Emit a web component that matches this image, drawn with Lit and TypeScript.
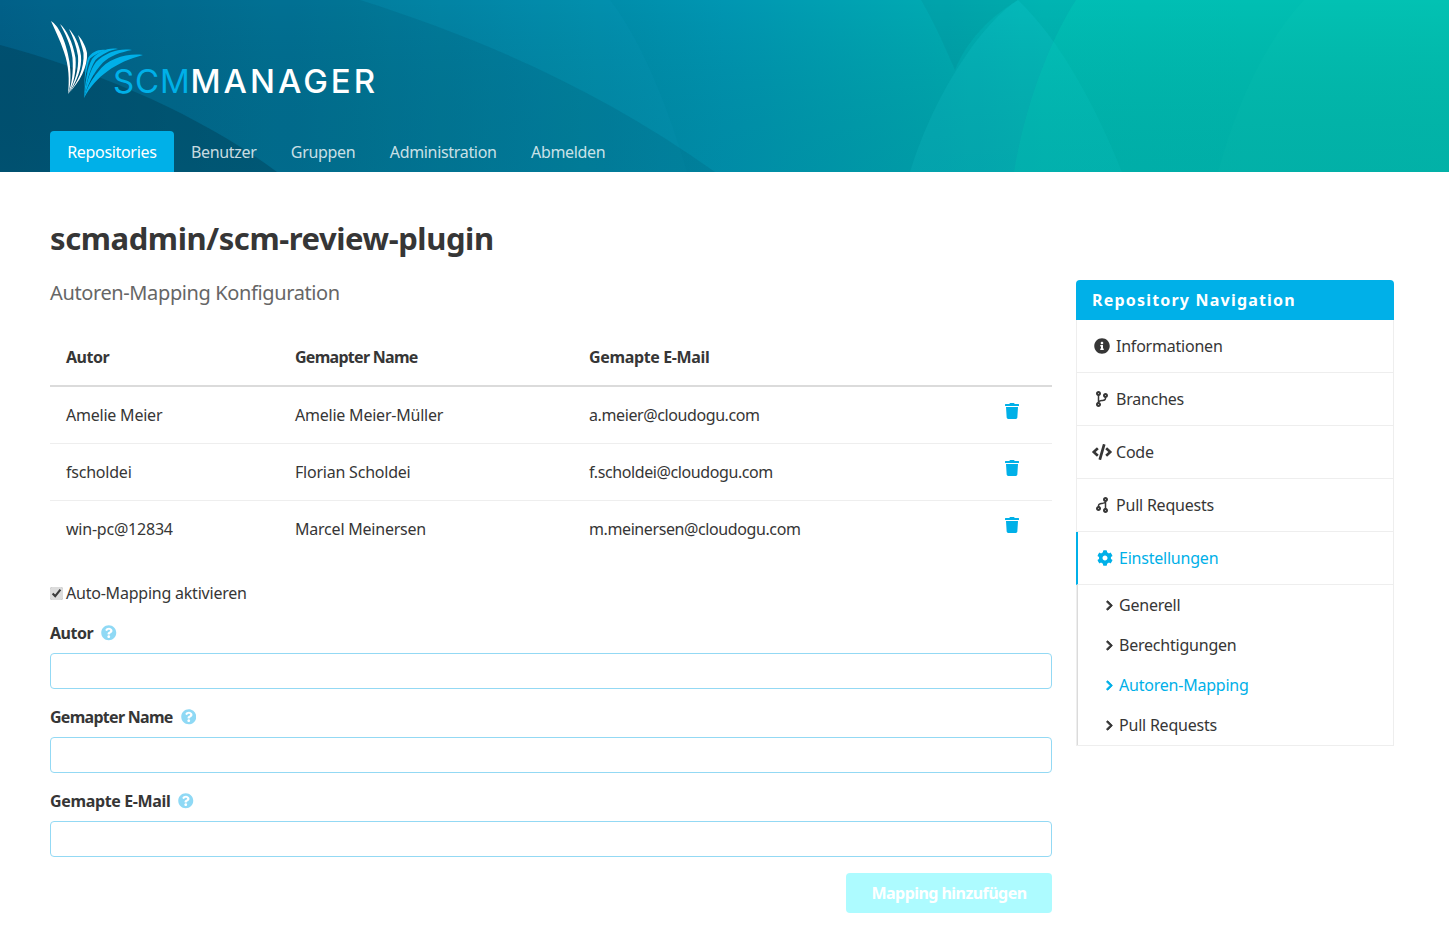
import { LitElement, html, css, svg } from 'lit'
import { customElement } from 'lit/decorators.js'

const ICONS: Record<string, [number, string]> = {
  info: [512, 'M256 8C119.043 8 8 119.083 8 256c0 136.997 111.043 248 248 248s248-111.003 248-248C504 119.083 392.957 8 256 8zm0 110c23.196 0 42 18.804 42 42s-18.804 42-42 42-42-18.804-42-42 18.804-42 42-42zm56 254c0 6.627-5.373 12-12 12h-88c-6.627 0-12-5.373-12-12v-24c0-6.627 5.373-12 12-12h12v-64h-12c-6.627 0-12-5.373-12-12v-24c0-6.627 5.373-12 12-12h64c6.627 0 12 5.373 12 12v100h12c6.627 0 12 5.373 12 12v24z'],
  branch: [384, 'M384 144c0-44.2-35.8-80-80-80s-80 35.8-80 80c0 36.4 24.3 67.1 57.5 76.8-.6 16.1-4.2 28.5-11 36.9-15.4 19.2-49.3 22.4-85.2 25.7-28.2 2.6-57.4 5.4-81.3 16.9v-144c32.5-10.2 56-40.5 56-76.3 0-44.2-35.8-80-80-80S0 35.8 0 80c0 35.8 23.5 66.1 56 76.3v199.3C23.5 365.9 0 396.2 0 432c0 44.2 35.8 80 80 80s80-35.8 80-80c0-34-21.2-63.1-51.2-74.6 3.1-5.2 7.8-9.8 14.9-13.4 16.2-8.2 40.4-10.4 66.1-12.8 42.2-3.9 90-8.4 118.2-43.4 14-17.4 21.1-39.8 21.6-67.9 31.6-10.8 54.4-40.7 54.4-75.9zM80 64c8.8 0 16 7.2 16 16s-7.2 16-16 16-16-7.2-16-16 7.2-16 16-16zm0 384c-8.8 0-16-7.2-16-16s7.2-16 16-16 16 7.2 16 16-7.2 16-16 16zm224-320c8.8 0 16 7.2 16 16s-7.2 16-16 16-16-7.2-16-16 7.2-16 16-16z'],
  code: [640, 'M278.9 511.5l-61-17.7c-6.4-1.8-10-8.5-8.2-14.9L346.2 8.7c1.8-6.4 8.5-10 14.9-8.2l61 17.7c6.4 1.8 10 8.5 8.2 14.9L293.8 503.3c-1.9 6.4-8.5 10.1-14.9 8.2zm-114-112.2l43.5-46.4c4.6-4.9 4.3-12.7-.8-17.2L117 256l90.6-79.7c5.1-4.5 5.5-12.3.8-17.2l-43.5-46.4c-4.5-4.8-12.1-5.1-17-.5L3.8 247.2c-5.1 4.7-5.1 12.8 0 17.5l144.1 135.1c4.9 4.6 12.5 4.4 17-.5zm327.2.6l144.1-135.1c5.1-4.7 5.1-12.8 0-17.5L492.1 112.1c-4.8-4.5-12.4-4.3-17 .5L431.6 159c-4.6 4.9-4.3 12.7.8 17.2L523 256l-90.6 79.7c-5.1 4.5-5.5 12.3-.8 17.2l43.5 46.4c4.5 4.9 12.1 5.1 17 .6z'],
  trash: [448, 'M432 32H312l-9.4-18.7A24 24 0 0 0 281.1 0H166.8a23.72 23.72 0 0 0-21.4 13.3L136 32H16A16 16 0 0 0 0 48v32a16 16 0 0 0 16 16h416a16 16 0 0 0 16-16V48a16 16 0 0 0-16-16zM53.2 467a48 48 0 0 0 47.9 45h245.8a48 48 0 0 0 47.9-45L416 128H32z'],
  cog: [512, 'M487.4 315.7l-42.6-24.6c4.3-23.2 4.3-47 0-70.2l42.6-24.6c4.9-2.8 7.1-8.6 5.5-14-11.1-35.6-30-67.8-54.7-94.6-3.8-4.1-10-5.1-14.8-2.3L380.8 110c-17.9-15.4-38.5-27.3-60.8-35.1V25.8c0-5.6-3.9-10.5-9.4-11.7-36.7-8.2-74.3-7.8-109.2 0-5.5 1.2-9.4 6.1-9.4 11.7V75c-22.2 7.9-42.8 19.8-60.8 35.1L88.7 85.5c-4.9-2.8-11-1.9-14.8 2.3-24.7 26.7-43.6 58.9-54.7 94.6-1.7 5.4.6 11.2 5.5 14L67.3 221c-4.3 23.2-4.3 47 0 70.2l-42.6 24.6c-4.9 2.8-7.1 8.6-5.5 14 11.1 35.6 30 67.8 54.7 94.6 3.8 4.1 10 5.1 14.8 2.3l42.6-24.6c17.9 15.4 38.5 27.3 60.8 35.1v49.2c0 5.6 3.9 10.5 9.4 11.7 36.7 8.2 74.3 7.8 109.2 0 5.5-1.2 9.4-6.1 9.4-11.7v-49.2c22.2-7.9 42.8-19.8 60.8-35.1l42.6 24.6c4.9 2.8 11 1.9 14.8-2.3 24.7-26.7 43.6-58.9 54.7-94.6 1.5-5.5-.7-11.3-5.6-14.1zM256 336c-44.1 0-80-35.9-80-80s35.9-80 80-80 80 35.9 80 80-35.9 80-80 80z'],
  chevron: [320, 'M285.476 272.971L91.132 467.314c-9.373 9.373-24.569 9.373-33.941 0l-22.667-22.667c-9.357-9.357-9.375-24.522-.04-33.901L188.505 256 34.484 101.255c-9.335-9.379-9.317-24.544.04-33.901l22.667-22.667c9.373-9.373 24.569-9.373 33.941 0L285.475 239.03c9.373 9.372 9.373 24.568.001 33.941z'],
  help: [512, 'M504 256c0 136.997-111.043 248-248 248S8 392.997 8 256C8 119.083 119.043 8 256 8s248 111.083 248 248zM262.655 90c-54.497 0-89.255 22.957-116.549 63.758-3.536 5.286-2.353 12.415 2.715 16.258l34.699 26.31c5.205 3.947 12.621 3.008 16.665-2.122 17.864-22.658 30.113-35.797 57.303-35.797 20.429 0 45.698 13.148 45.698 32.958 0 14.976-12.363 22.667-32.534 33.976C247.128 238.528 216 254.941 216 296v4c0 6.627 5.373 12 12 12h56c6.627 0 12-5.373 12-12v-1.333c0-28.462 83.186-29.647 83.186-106.667 0-58.002-60.165-102-116.531-102zM256 338c-25.365 0-46 20.635-46 46 0 25.364 20.635 46 46 46s46-20.636 46-46c0-25.365-20.635-46-46-46z']
}

const icon = (name: string, cls = '') => {
  const [w, d] = ICONS[name]
  return html`<svg class="icon ${cls}" viewBox="0 0 ${w} 512" fill="currentColor">${svg`<path d=${d}></path>`}</svg>`
}

const mappings = [
  ['Amelie Meier', 'Amelie Meier-Müller', 'a.meier@cloudogu.com'],
  ['fscholdei', 'Florian Scholdei', 'f.scholdei@cloudogu.com'],
  ['win-pc@12834', 'Marcel Meinersen', 'm.meinersen@cloudogu.com']
]

const navItems = [
  ['info', 'Informationen'],
  ['branch', 'Branches'],
  ['code', 'Code'],
  ['branch', 'Pull Requests']
]

const fields = [
  ['Autor', ''],
  ['Gemapter Name', 'tight'],
  ['Gemapte E-Mail', 'loose']
]

const subItems = ['Generell', 'Berechtigungen', 'Autoren-Mapping', 'Pull Requests']

@customElement('app-root')
export class AppRoot extends LitElement {
  static styles = css`
    * {
      box-sizing: border-box;
    }
    :host {
      display: block;
      font-family: 'Noto Sans', sans-serif;
      font-size: 16px;
      letter-spacing: -0.22px;
      color: #363636;
      background: #fff;
    }
    .icon {
      display: block;
      height: 16px;
      flex: none;
    }
    .hero {
      position: relative;
      height: 172px;
      padding: 0 50px;
      display: flex;
      flex-direction: column;
      overflow: hidden;
      background: #007c9c;
    }
    .hero-bg {
      position: absolute;
      inset: 0;
      width: 100%;
      height: 100%;
    }
    .brand {
      position: relative;
      height: 131px;
    }
    .logo-mark {
      display: block;
      position: absolute;
      left: 0;
      top: 18px;
      width: 100px;
      height: 84px;
    }
    .logo-text {
      position: absolute;
      left: 63px;
      top: 62px;
      font-family: 'Inter', sans-serif;
      font-size: 33px;
      line-height: 38px;
      letter-spacing: 3px;
      font-weight: 500;
      color: #fff;
      white-space: nowrap;
    }
    .logo-text span {
      color: #00b0e8;
      font-weight: 400;
      letter-spacing: 0.8px;
    }
    .tabs {
      position: relative;
      display: flex;
      height: 41px;
    }
    .tabs a {
      padding: 0 17.2px;
      line-height: 43px;
      letter-spacing: -0.32px;
      color: rgba(255, 255, 255, 0.8);
    }
    .tabs a.active {
      background: #00b0e8;
      color: #fff;
      border-radius: 4px 4px 0 0;
    }
    main {
      padding: 46px 55px 18px 50px;
    }
    h1 {
      margin: 0;
      font-size: 31px;
      line-height: 40px;
      font-weight: 700;
      letter-spacing: -0.42px;
    }
    .columns {
      display: flex;
      gap: 24px;
    }
    .content {
      width: 1002px;
      flex: none;
    }
    .sidebar {
      width: 318px;
      flex: none;
      padding-top: 22px;
    }
    h2 {
      margin: 20px 0 0;
      font-size: 20px;
      line-height: 30px;
      font-weight: 400;
      letter-spacing: -0.38px;
      color: #666;
    }
    table {
      width: 100%;
      margin-top: 20px;
      border-collapse: collapse;
      table-layout: fixed;
    }
    th,
    td {
      padding: 0 0 0 16px;
      text-align: left;
      height: 57px;
      border-bottom: 1px solid #eee;
    }
    td:nth-child(3) {
      letter-spacing: -0.4px;
    }
    th {
      height: 58px;
      font-weight: 700;
      letter-spacing: -0.5px;
      border-bottom: 2px solid #dbdbdb;
    }
    .tight {
      letter-spacing: -0.72px;
    }
    .loose {
      letter-spacing: -0.36px;
    }
    tr:last-child td {
      border-bottom: none;
    }
    .col-author {
      width: 229px;
    }
    .col-name {
      width: 294px;
    }
    .col-action {
      width: 62px;
    }
    .trash {
      display: block;
      color: #00b0e8;
      margin: -7px 0 0 -1px;
    }
    .auto {
      display: flex;
      align-items: center;
      gap: 3px;
      margin-top: 24px;
      line-height: 24px;
    }
    .auto input {
      width: 13px;
      height: 13px;
      margin: 0;
      accent-color: #dcdcdc;
    }
    .field {
      margin-top: 16px;
    }
    .label {
      display: flex;
      align-items: center;
      gap: 8px;
      height: 24px;
      font-weight: 700;
      letter-spacing: -0.5px;
      margin-bottom: 8px;
    }
    .label.tight {
      letter-spacing: -0.72px;
    }
    .label.loose {
      letter-spacing: -0.36px;
    }
    .help {
      height: 15.5px;
      color: #8fd9f5;
    }
    .input {
      display: block;
      width: 100%;
      height: 36px;
      border: 1px solid #93d9f4;
      border-radius: 4px;
      background: #fff;
    }
    .actions {
      display: flex;
      justify-content: flex-end;
      margin-top: 16px;
    }
    .button {
      width: 206px;
      height: 40px;
      border: none;
      border-radius: 4px;
      background: #adfbff;
      color: #fff;
      font: inherit;
      font-weight: 700;
      letter-spacing: -0.55px;
    }
    .panel-head {
      height: 40px;
      padding-left: 16px;
      line-height: 40px;
      border-radius: 4px 4px 0 0;
      background: #00b0e8;
      color: #fff;
      font-weight: 700;
      letter-spacing: 1.2px;
    }
    .panel {
      border: 1px solid #eee;
      border-top: none;
    }
    .item {
      display: flex;
      align-items: center;
      height: 53px;
      padding-left: 16px;
      gap: 5px;
      border-bottom: 1px solid #eee;
    }
    .item .slot {
      width: 18px;
      flex: none;
      display: flex;
      justify-content: center;
    }
    .item .flip {
      transform: rotate(180deg);
    }
    .item.active {
      margin-left: -1px;
      border-left: 2px solid #00b0e8;
      color: #00b0e8;
      padding-left: 18px;
    }
    .sub {
      border-left: 1px solid #dbdbdb;
    }
    .sub a {
      display: flex;
      align-items: center;
      gap: 6px;
      height: 40px;
      padding-left: 28px;
    }
    .sub a .icon {
      height: 11px;
      width: 7px;
      stroke: currentColor;
      stroke-width: 40;
    }
    .sub a.active {
      color: #00b0e8;
    }
  `

  render() {
    return html`
      <header class="hero">
        ${this.renderBackground()}
        <div class="brand">
          ${this.renderLogo()}
          <div class="logo-text"><span>SCM</span>MANAGER</div>
        </div>
        <nav class="tabs">
          <a class="active">Repositories</a>
          <a>Benutzer</a>
          <a>Gruppen</a>
          <a>Administration</a>
          <a>Abmelden</a>
        </nav>
      </header>
      <main>
        <h1>scmadmin/scm-review-plugin</h1>
        <div class="columns">
          <section class="content">
            <h2>Autoren-Mapping Konfiguration</h2>
            <table>
              <thead>
                <tr>
                  <th class="col-author">Autor</th>
                  <th class="col-name tight">Gemapter Name</th>
                  <th class="loose">Gemapte E-Mail</th>
                  <th class="col-action"></th>
                </tr>
              </thead>
              <tbody>
                ${mappings.map(
                  (row) => html`
                    <tr>
                      ${row.map((cell) => html`<td>${cell}</td>`)}
                      <td>${icon('trash', 'trash')}</td>
                    </tr>
                  `
                )}
              </tbody>
            </table>
            <label class="auto"><input type="checkbox" checked />Auto-Mapping aktivieren</label>
            ${fields.map(
              ([label, cls]) => html`
                <div class="field">
                  <div class="label ${cls}">${label} ${icon('help', 'help')}</div>
                  <div class="input"></div>
                </div>
              `
            )}
            <div class="actions"><button class="button" disabled>Mapping hinzufügen</button></div>
          </section>
          <aside class="sidebar">
            <div class="panel-head">Repository Navigation</div>
            <div class="panel">
              ${navItems.map(
                ([name, label], i) => html`
                  <a class="item">
                    <span class="slot">${icon(name, i === 3 ? 'flip' : '')}</span>${label}
                  </a>
                `
              )}
              <a class="item active"><span class="slot">${icon('cog')}</span>Einstellungen</a>
              <div class="sub">
                ${subItems.map(
                  (label) => html`
                    <a class=${label === 'Autoren-Mapping' ? 'active' : ''}>${icon('chevron')}${label}</a>
                  `
                )}
              </div>
            </div>
          </aside>
        </div>
      </main>
    `
  }

  renderBackground() {
    return html`
      <svg class="hero-bg" viewBox="0 0 1449 172" preserveAspectRatio="none">
        ${svg`
          <defs>
            <linearGradient id="base" x1="0" y1="0" x2="1449" y2="0" gradientUnits="userSpaceOnUse">
              <stop offset="0" stop-color="#01608a" />
              <stop offset="0.25" stop-color="#007a9b" />
              <stop offset="0.5" stop-color="#0096b2" />
              <stop offset="0.72" stop-color="#00b4b2" />
              <stop offset="1" stop-color="#00b8ae" />
            </linearGradient>
            <linearGradient id="shade" x1="0" y1="0" x2="0" y2="172" gradientUnits="userSpaceOnUse">
              <stop offset="0" stop-color="#000" stop-opacity="0" />
              <stop offset="1" stop-color="#004a60" stop-opacity="0.14" />
            </linearGradient>
          </defs>
          <rect width="1449" height="172" fill="url(#base)" />
          <path d="M0 0H610C645 45 672 120 687 172H0Z" fill="#1fb6da" opacity="0.08" />
          <path d="M360 0C480 38 600 90 715 172H0V0Z" fill="#00405a" opacity="0.14" />
          <path d="M0 45C100 72 200 115 277 172H0Z" fill="#00445e" opacity="0.5" />
          <path d="M921 0H1018C985 20 965 45 955 70C940 35 930 15 921 0Z" fill="#00405a" opacity="0.07" />
          <path d="M1018 0C985 20 935 90 910 172H1122C1095 105 1060 40 1018 0Z" fill="#10cfd0" opacity="0.22" />
          <path d="M1076 0C1050 40 1025 105 1014 172H1449V0Z" fill="#00d8bc" opacity="0.26" />
          <path d="M1304 0C1262 45 1235 110 1218 172H1449V0Z" fill="#10d4c0" opacity="0.12" />
          <rect width="1449" height="172" fill="url(#shade)" />
        `}
      </svg>
    `
  }

  renderLogo() {
    return html`
      <svg class="logo-mark" viewBox="50 18 100 84">
        ${svg`
          <g fill="#fff">
            <path d="M51 21C58 25 66 40 69.500 62C71 74 71 85 68 94C69.500 80 69 66 64 52C60 40 55 30 51 21Z" />
            <path d="M60 24C66 29 73 42 75.500 58C76.500 70 74 84 68 94C72 84 73.500 72 72.500 58C70.500 44 65 33 60 24Z" />
            <path d="M69 29C74 34 79.500 44 81 56C82 68 77 82 68 94C75 82 79 70 78 56C76.500 46 73 37 69 29Z" />
            <path d="M78 35C82.500 40 86 47 87 53C88 66 80 82 68 94C78 82 84.500 68 83.500 53C82 46 80 41 78 35Z" />
          </g>
          <g fill="#00b0e8">
            <path d="M84 98C96 76 116 62 143 55C128 53 108 58 98 72C91 80 87 88 84 98Z" />
            <path d="M84 98C88 84 93 73 103 62.500C110 56 121 52 132 50C120 48 106 52 96 62C90 70 86 84 84 98Z" />
            <path d="M84 98C86 86 89 70 95.500 60C102 54 110 50 118 49C108 47 98 52 92 59C87 68 85 84 84 98Z" />
            <path d="M84 98C84 84 86 68 90 58.500C94 55 100 52 106 50C98 49 92 52 88 58C85 66 84 84 84 98Z" />
          </g>
        `}
      </svg>
    `
  }
}
